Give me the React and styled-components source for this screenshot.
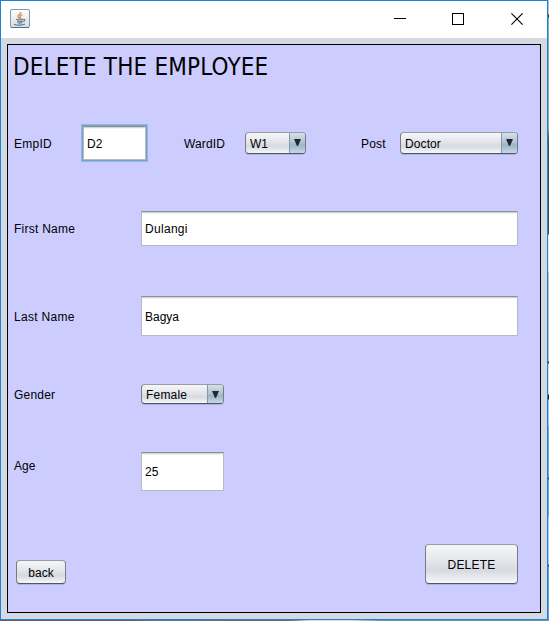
import React from "react";
import styled, { createGlobalStyle, css } from "styled-components";

const GlobalStyle = createGlobalStyle`
  *, *::before, *::after { box-sizing: border-box; }
  body { margin: 0; background: #fff; overflow: hidden; }
`;

const Desktop = styled.div`
  width: 549px;
  height: 621px;
  padding: 0 1px 1px 0;
  background:
    linear-gradient(90deg, #6b5f5c 0 130px, #5b7788 150px 200px, #6d6a6c 225px 290px, #dcdcdc 310px 350px, #7195b5 380px) 0 100% / 548px 1px no-repeat,
    linear-gradient(#a9c5d4 0 14px, #26333d 15px 17px, #8babb9 18px 127px, #3e4f59 140px 234px, #dcebf7 235px 271px, #a8c2d8 272px 361px, #222 362px 363px, #c7e0f5 364px 394px, #222 395px 399px, #9fc3e6 400px 426px, #71a5d8 427px 477px, #345 478px 479px, #75a5d2 480px 516px, #a6cbe9 517px 564px, #345 565px 566px, #659bd2 567px);
  font-family: "Liberation Sans", Arial, sans-serif;
  font-size: 12px;
  color: #000;
`;

const Window = styled.main`
  display: flex;
  flex-direction: column;
  height: 620px;
  border: 1px solid #1b82d6;
  background: #d6d9df;
`;

const TitleBar = styled.header`
  display: flex;
  align-items: center;
  justify-content: space-between;
  height: 37px;
  padding: 0 24px 1px 9px;
  background: #fff;
`;

const WindowControls = styled.div`
  display: flex;
  gap: 46px;
  svg { display: block; }
  svg:last-child { margin-left: 1px; }
`;

const Panel = styled.section`
  width: 534px;
  height: 569px;
  margin: 6px 0 0 6px;
  border: 1px solid #000;
  background: #ccccff;
`;

const Heading = styled.h1`
  height: 44px;
  margin: 0;
  padding: 7px 0 0 5px;
  font: 400 24px/30px "DejaVu Sans Condensed", "DejaVu Sans", sans-serif;
  font-stretch: condensed;
  letter-spacing: 0.17px;
  white-space: nowrap;
`;

const Row = styled.div`
  display: flex;
  align-items: center;
  height: ${(p) => p.$height}px;
  margin-top: ${(p) => p.$gap}px;
  padding-left: 6px;
`;

const Label = styled.label`
  flex: none;
  width: ${(p) => p.$width}px;
  margin-left: ${(p) => p.$before || 0}px;
  margin-top: ${(p) => p.$shift || 0}px;
  line-height: 14px;
  letter-spacing: ${(p) => p.$tracking || 0}px;
  white-space: nowrap;
`;

const Field = styled.div`
  display: flex;
  align-items: center;
  width: ${(p) => p.$width}px;
  height: ${(p) => p.$height}px;
  padding: ${(p) => p.$inset ?? 2}px 0 0 3px;
  border: 1px solid #b8b8bd;
  border-top-color: #8d8e90;
  background: #fff;
  box-shadow: inset 0 1px #d4d4d4, inset 0 2px #f3f3f3;
  letter-spacing: ${(p) => p.$tracking || 0}px;
  ${(p) => p.$focused && css`
    box-shadow: 0 0 0 1px #73a4d1, 0 0 0 2px #94b4e2, inset 0 1px #d4d4d4, inset 0 2px #f3f3f3;
  `}
`;

const glossy = css`
  border: 1px solid #777c84;
  border-top-color: #989ca3;
  border-bottom-color: #52565d;
  border-radius: 4px;
  background: linear-gradient(#f5f6f8, #e5e7eb 40%, #d6d9df 66%, #f4f7fb);
  box-shadow: 0 1px rgba(90, 90, 130, 0.25);
`;

const Combo = styled.div`
  ${glossy}
  display: flex;
  width: ${(p) => p.$width}px;
  height: ${(p) => p.$height || 22}px;
  overflow: hidden;
  letter-spacing: ${(p) => p.$tracking || 0}px;
`;

const ComboValue = styled.span`
  flex: 1;
  align-self: center;
  padding: 2px 0 0 4px;
`;

const ComboArrow = styled.span`
  display: flex;
  align-items: center;
  justify-content: center;
  width: 16px;
  border-left: 1px solid #8298ad;
  background: linear-gradient(#d5e0e9, #b3c4d3 45%, #9eb3c5 60%, #c4d8e8);
`;

const Button = styled.button`
  ${glossy}
  width: ${(p) => p.$width}px;
  height: ${(p) => p.$height}px;
  padding: 1px 0 0;
  font: inherit;
  color: #000;
  letter-spacing: ${(p) => p.$tracking || 0}px;
`;

const Actions = styled.footer`
  display: flex;
  align-items: flex-end;
  justify-content: space-between;
  height: 40px;
  margin-top: 53px;
  padding: 0 22px 0 8px;
`;

function JavaIcon() {
  return (
    <svg width="20" height="20" viewBox="0 0 20 20" fill="none">
      <defs>
        <linearGradient id="tile" x1="0" y1="0" x2="0" y2="1">
          <stop stopColor="#fff" />
          <stop offset="1" stopColor="#d4dce2" />
        </linearGradient>
      </defs>
      <rect x=".5" y=".5" width="19" height="18" rx="1.5" fill="url(#tile)" stroke="#8799a5" />
      <path d="M1 18.5h18" stroke="#586f80" />
      <path d="M10.8 3c.7 2-3.1 2.4-2.7 4.7.2 1 1.2 1.6 1.3 2.2M12.3 5.8c-2.3.8-2.7 1.8-1.7 3 .4.6.1 1.1-.5 1.5" stroke="#e78540" strokeWidth="1.4" />
      <path d="M6 10.2c2 .8 5.5.8 7.2 0M7 12c1.6.8 4.4.7 5.8 0M7.5 13.6c1.4.7 3.5.7 4.8 0M13.4 10.3c2-.4 1.9 1.7-.2 2.3M4 15.2c2.8 1.3 8.7 1.2 11-.1" stroke="#587991" strokeWidth="1.1" />
    </svg>
  );
}

function Select({ children, ...props }) {
  return (
    <Combo {...props}>
      <ComboValue>{children}</ComboValue>
      <ComboArrow>
        <svg width="7" height="7" viewBox="0 0 7 7"><path d="M0 0h7L4 7H3Z" fill="#22282d" /></svg>
      </ComboArrow>
    </Combo>
  );
}

export default function App() {
  return (
    <Desktop>
      <GlobalStyle />
      <Window>
        <TitleBar>
          <JavaIcon />
          <WindowControls>
            <svg width="12" height="12"><path d="M0 5.5h12" stroke="#000" /></svg>
            <svg width="12" height="12"><rect x=".5" y=".5" width="11" height="11" fill="none" stroke="#000" /></svg>
            <svg width="12" height="12"><path d="m.4.4 11.2 11.2m0-11.2L.4 11.6" stroke="#000" strokeWidth="1.1" /></svg>
          </WindowControls>
        </TitleBar>
        <Panel>
          <Heading>DELETE THE EMPLOYEE</Heading>
          <Row $height={35} $gap={36}>
            <Label $width={69} $shift={2} $tracking={0.25}>EmpID</Label>
            <Field $width={63} $height={34} $focused>D2</Field>
            <Label $width={61} $before={38} $shift={2} $tracking={0.15}>WardID</Label>
            <Select $width={61}>W1</Select>
            <Label $width={39} $before={55} $shift={2} $tracking={0.2}>Post</Label>
            <Select $width={118} $tracking={0.1}>Doctor</Select>
          </Row>
          <Row $height={35} $gap={51}>
            <Label $width={127} $tracking={0.25}>First Name</Label>
            <Field $width={377} $height={35} $inset={0} $tracking={0.3}>Dulangi</Field>
          </Row>
          <Row $height={40} $gap={50}>
            <Label $width={127} $shift={2} $tracking={0.3}>Last Name</Label>
            <Field $width={377} $height={40}>Bagya</Field>
          </Row>
          <Row $height={20} $gap={48}>
            <Label $width={127} $shift={2} $tracking={0.2}>Gender</Label>
            <Select $width={83} $height={20} $tracking={0.2}>Female</Select>
          </Row>
          <Row $height={39} $gap={48}>
            <Label $width={127} $shift={-12}>Age</Label>
            <Field $width={83} $height={39} $inset={0} $tracking={0.2}>25</Field>
          </Row>
          <Actions>
            <Button $width={50} $height={24}>back</Button>
            <Button $width={93} $height={40} $tracking={0.2}>DELETE</Button>
          </Actions>
        </Panel>
      </Window>
    </Desktop>
  );
}
